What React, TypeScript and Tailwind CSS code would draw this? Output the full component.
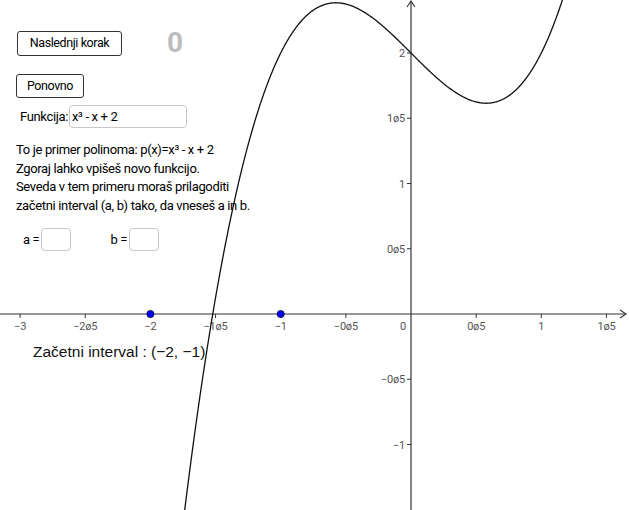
import React from 'react';

const UNIT_X = 130.3;
const UNIT_Y = 130.5;
const OX = 411;
const OY = 314;

const p = (x: number) => x * x * x - x + 2;

function curvePath() {
  const pts: string[] = [];
  for (let x = -1.78; x <= 1.2; x += 0.005) {
    const px = OX + x * UNIT_X;
    const py = OY - p(x) * UNIT_Y;
    pts.push(`${pts.length ? 'L' : 'M'}${px.toFixed(2)},${py.toFixed(2)}`);
  }
  return pts.join(' ');
}

const xTicks = [
  { v: -3, label: '−3' },
  { v: -2.5, label: '−2ø5' },
  { v: -2, label: '−2' },
  { v: -1.5, label: '−1ø5' },
  { v: -1, label: '−1' },
  { v: -0.5, label: '−0ø5' },
  { v: 0.5, label: '0ø5' },
  { v: 1, label: '1' },
  { v: 1.5, label: '1ø5' },
];

const yTicks = [
  { v: 2, label: '2' },
  { v: 1.5, label: '1ø5' },
  { v: 1, label: '1' },
  { v: 0.5, label: '0ø5' },
  { v: -0.5, label: '−0ø5' },
  { v: -1, label: '−1' },
];

function Graph() {
  return (
    <svg className="absolute inset-0" width={629} height={510} viewBox="0 0 629 510">
      {/* axes */}
      <line x1={0} y1={OY} x2={626} y2={OY} stroke="#333" strokeWidth={1.2} />
      <path d={`M620,${OY - 4} L626,${OY} L620,${OY + 4}`} fill="none" stroke="#333" strokeWidth={1.1} />
      <line x1={OX} y1={1} x2={OX} y2={510} stroke="#333" strokeWidth={1.2} />
      <path d={`M${OX - 4},7 L${OX},1 L${OX + 4},7`} fill="none" stroke="#333" strokeWidth={1.1} />

      <g fontFamily="Roboto, 'Liberation Sans', sans-serif" fontSize={11} fill="#555" letterSpacing={-0.2}>
        {xTicks.map((t) => {
          const x = OX + t.v * UNIT_X;
          return (
            <g key={t.label}>
              <line x1={x} y1={OY} x2={x} y2={OY + 4} stroke="#333" strokeWidth={1} />
              <text x={x} y={OY + 16} textAnchor="middle">
                {t.label}
              </text>
            </g>
          );
        })}
        <text x={OX - 5} y={OY + 16} textAnchor="end">
          0
        </text>
        {yTicks.map((t) => {
          const y = OY - t.v * UNIT_Y;
          return (
            <g key={t.label}>
              <line x1={OX - 4} y1={y} x2={OX} y2={y} stroke="#333" strokeWidth={1} />
              <text x={OX - 6} y={y + 4} textAnchor="end">
                {t.label}
              </text>
            </g>
          );
        })}
      </g>

      <path d={curvePath()} fill="none" stroke="#111" strokeWidth={1.3} />

      <circle cx={OX - 2 * UNIT_X} cy={OY} r={3.6} fill="#0000ff" stroke="#111" strokeWidth={0.8} />
      <circle cx={OX - UNIT_X} cy={OY} r={3.6} fill="#0000ff" stroke="#111" strokeWidth={0.8} />
    </svg>
  );
}

export default function App() {
  return (
    <div className="relative w-[629px] h-[510px] overflow-hidden bg-white font-['Roboto','Liberation_Sans',sans-serif] text-[13px] tracking-[-0.35px] text-black">
      <Graph />

      <div className="relative flex flex-col items-start pl-4 pt-[29px]">
        <div className="flex items-center">
          <button className="ml-px h-[25px] w-[105px] rounded-[3px] border border-[#333] bg-white text-[12.5px] leading-none tracking-[-0.4px]">
            Naslednji korak
          </button>
          <span className="ml-[45px] text-[28px] font-bold leading-none tracking-normal text-[#bdbdbd]">0</span>
        </div>

        <button className="mt-[17px] h-[24px] w-[68px] rounded-[3px] border border-[#333] bg-white text-[12.5px] leading-none tracking-[-0.4px]">
          Ponovno
        </button>

        <div className="mt-[7px] ml-1 flex items-center">
          <span>Funkcija:</span>
          <div className="ml-[1px] flex h-[23px] w-[118px] items-center rounded-[4px] border border-[#c8c8c8] bg-white pl-[2px]">
            x³ - x + 2
          </div>
        </div>

        <div className="mt-[13px] leading-[18.5px]">
          <p>To je primer polinoma: p(x)=x³ - x + 2</p>
          <p>Zgoraj lahko vpišeš novo funkcijo.</p>
          <p>Seveda v tem primeru moraš prilagoditi</p>
          <p>začetni interval (a, b) tako, da vneseš a in b.</p>
        </div>

        <div className="mt-[13px] flex items-center">
          <span className="ml-[7px]">a =</span>
          <div className="ml-[2px] h-[23px] w-[30px] rounded-[4px] border border-[#c8c8c8] bg-white" />
          <span className="ml-[39px]">b =</span>
          <div className="ml-[2px] h-[23px] w-[30px] rounded-[4px] border border-[#c8c8c8] bg-white" />
        </div>

        <div className="mt-[89px] ml-[17px] font-['Liberation_Sans',sans-serif] text-[15.5px] tracking-normal text-[#111]">
          Začetni interval : (−2, −1)
        </div>
      </div>
    </div>
  );
}
